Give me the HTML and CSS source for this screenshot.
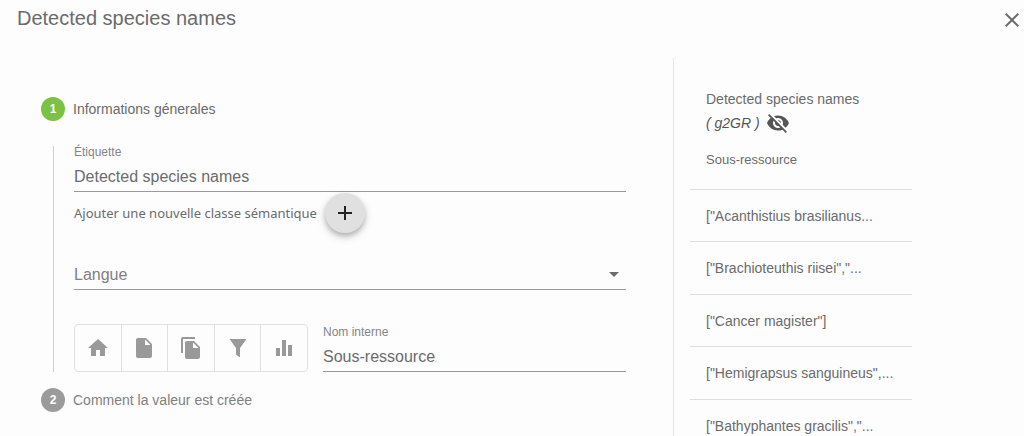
FILE: index.html
```html
<!DOCTYPE html>
<html lang="fr">
<head>
    <meta charset="UTF-8">
    <meta name="viewport" content="width=device-width, initial-scale=1">
    <title>Detected species names</title>
    <link rel="stylesheet" href="styles.css">
</head>
<body>
    <div class="dialog">
        <header class="dialog-header">
            <h1>Detected species names</h1>
            <button type="button" class="close-btn" aria-label="Fermer">
                <svg class="icon" viewBox="0 0 24 24"><path d="M19 6.41L17.59 5 12 10.59 6.41 5 5 6.41 10.59 12 5 17.59 6.41 19 12 13.41 17.59 19 19 17.59 13.41 12z"/></svg>
            </button>
        </header>

        <div class="dialog-body">
            <main class="stepper">
                <button type="button" class="step-label active">
                    <span class="step-number">1</span>
                    Informations génerales
                </button>

                <form class="step-content">
                    <div class="field">
                        <label for="label">Étiquette</label>
                        <input type="text" id="label" value="Detected species names">
                    </div>

                    <div class="add-class">
                        <span>Ajouter une nouvelle classe sémantique</span>
                        <button type="button" class="fab" aria-label="Ajouter">
                            <svg class="icon" viewBox="0 0 24 24"><path d="M19 13h-6v6h-2v-6H5v-2h6V5h2v6h6v2z"/></svg>
                        </button>
                    </div>

                    <div class="select-field">
                        <select aria-label="Langue">
                            <option value="">Langue</option>
                            <option value="fr">Français</option>
                            <option value="en">Anglais</option>
                        </select>
                        <svg class="icon select-arrow" viewBox="0 0 24 24"><path d="M7 10l5 5 5-5z"/></svg>
                    </div>

                    <div class="scope-row">
                        <div class="toggle-group">
                            <button type="button" aria-label="Accueil">
                                <svg class="icon" viewBox="0 0 24 24"><path d="M10 20v-6h4v6h5v-8h3L12 3 2 12h3v8z"/></svg>
                            </button>
                            <button type="button" aria-label="Document">
                                <svg class="icon" viewBox="0 0 24 24"><path d="M6 2c-1.1 0-1.99.9-1.99 2L4 20c0 1.100.89 2 1.990 2H18c1.100 0 2-.9 2-2V8l-6-6H6zm7 7V3.500L18.500 9H13z"/></svg>
                            </button>
                            <button type="button" aria-label="Sous-ressource">
                                <svg class="icon" viewBox="0 0 24 24"><path d="M16 1H4c-1.100 0-2 .9-2 2v14h2V3h12V1zm-1 4l6 6v10c0 1.100-.9 2-2 2H7.990C6.890 23 6 22.100 6 21l.01-14c0-1.100.89-2 1.990-2h7zm-1 7h5.500L14 6.500V12z"/></svg>
                            </button>
                            <button type="button" aria-label="Facette">
                                <svg class="icon" viewBox="0 0 24 24"><path d="M3.500 3h17L14 12v8.500q0 .8-.8.5L10 18.500V12z"/></svg>
                            </button>
                            <button type="button" aria-label="Graphique">
                                <svg class="icon" viewBox="0 0 24 24"><path d="M10 20h4V4h-4v16zm-6 0h4v-8H4v8zM16 9v11h4V9h-4z"/></svg>
                            </button>
                        </div>
                        <div class="field">
                            <label for="internal-name">Nom interne</label>
                            <input type="text" id="internal-name" value="Sous-ressource">
                        </div>
                    </div>
                </form>

                <button type="button" class="step-label">
                    <span class="step-number">2</span>
                    Comment la valeur est créée
                </button>
            </main>

            <aside class="preview">
                <table>
                    <thead>
                        <tr>
                            <th>
                                <div>Detected species names</div>
                                <div class="field-id">
                                    <i>( g2GR )</i>
                                    <svg class="icon" viewBox="0 0 24 24"><path d="M12 7c2.760 0 5 2.240 5 5 0 .65-.13 1.260-.36 1.830l2.920 2.920c1.510-1.260 2.700-2.890 3.430-4.750-1.730-4.390-6-7.500-11-7.500-1.400 0-2.740.25-3.980.7l2.160 2.160C10.740 7.130 11.350 7 12 7zM2 4.270l2.280 2.280.46.46C3.080 8.300 1.780 10.020 1 12c1.730 4.390 6 7.500 11 7.500 1.550 0 3.030-.3 4.380-.84l.42.42L19.730 22 21 20.730 3.270 3 2 4.270zM7.530 9.800l1.550 1.550c-.05.21-.08.43-.08.65 0 1.660 1.340 3 3 3 .22 0 .44-.03.65-.08l1.550 1.550c-.67.33-1.410.53-2.200.53-2.760 0-5-2.240-5-5 0-.79.2-1.530.53-2.200zm4.310-.78l3.150 3.150.02-.16c0-1.660-1.340-3-3-3l-.17.01z"/></svg>
                                </div>
                                <div class="field-scope">Sous-ressource</div>
                            </th>
                        </tr>
                    </thead>
                    <tbody>
                        <tr><td>["Acanthistius brasilianus...</td></tr>
                        <tr><td>["Brachioteuthis riisei","...</td></tr>
                        <tr><td>["Cancer magister"]</td></tr>
                        <tr><td>["Hemigrapsus sanguineus",...</td></tr>
                        <tr><td>["Bathyphantes gracilis","...</td></tr>
                    </tbody>
                </table>
            </aside>
        </div>
    </div>
</body>
</html>
```
FILE: styles.css
```css
* {
    box-sizing: border-box;
}

body {
    margin: 0;
    font-family: Arial, "Liberation Sans", sans-serif;
    font-size: 14px;
    line-height: 24px;
    color: #6b6b6b;
    background: #fdfdfd;
}

button,
input,
select {
    font-family: inherit;
    color: inherit;
    margin: 0;
    padding: 0;
    border: none;
    background: none;
}

button {
    cursor: pointer;
}

.icon {
    display: block;
    width: 24px;
    height: 24px;
    fill: currentColor;
}

.dialog {
    display: flex;
    flex-direction: column;
    height: 100vh;
    overflow: hidden;
}

.dialog-header {
    display: flex;
    justify-content: space-between;
    padding: 6px 0 6px 17px;
}

.dialog-header h1 {
    margin: 0;
    font-size: 20px;
    font-weight: normal;
}

.close-btn {
    margin-top: 2px;
}

.dialog-body {
    display: flex;
    flex: 1;
    min-height: 0;
    margin-top: 20px;
}

/* Stepper */
.stepper {
    flex: 1;
    padding: 39px 47px 0 41px;
}

.step-label {
    display: flex;
    align-items: center;
    gap: 8px;
    font-size: 14px;
    line-height: 24px;
    color: #808080;
}

.step-label.active {
    color: #6b6b6b;
}

.step-number {
    width: 24px;
    height: 24px;
    border-radius: 50%;
    font-size: 12px;
    font-weight: bold;
    color: white;
    background: #9b9b9b;
}

.active .step-number {
    background: #7bc142;
}

.step-content {
    margin: 25px 0 16px 12px;
    padding-left: 20px;
    border-left: 1px solid #cfcfcf;
}

.field label {
    display: block;
    font-size: 12px;
    line-height: 13px;
    color: #858585;
}

.field input,
.select-field select {
    display: block;
    width: 100%;
    height: 33px;
    padding-top: 3px;
    font-size: 16px;
    border-bottom: 1px solid #999;
}

.add-class {
    display: flex;
    align-items: center;
    gap: 8px;
    margin-top: 1px;
    font-family: "Segoe UI", "Noto Sans", sans-serif;
    font-size: 13px;
}

.fab {
    display: flex;
    align-items: center;
    justify-content: center;
    width: 40px;
    height: 40px;
    border-radius: 50%;
    color: #222;
    background: #e0e0e0;
    box-shadow: 0 3px 5px rgba(0,0,0,0.2), 0 4px 10px rgba(0,0,0,0.14);
}

.select-field {
    position: relative;
    margin-top: 24px;
}

.select-field select {
    appearance: none;
    color: #808080;
}

.select-arrow {
    position: absolute;
    top: 5px;
    right: 0;
    pointer-events: none;
}

.scope-row {
    display: flex;
    align-items: flex-end;
    gap: 15px;
    margin-top: 34px;
}

.scope-row .field {
    flex: 1;
}

.toggle-group {
    display: flex;
    width: 234px;
    height: 48px;
    border: 1px solid #e0e0e0;
    border-radius: 4px;
}

.toggle-group button {
    display: flex;
    flex: 1;
    align-items: center;
    justify-content: center;
    color: #999;
}

.toggle-group button + button {
    border-left: 1px solid #e0e0e0;
}

/* Preview */
.preview {
    width: 351px;
    padding: 13px 16px 0;
    border-left: 1px solid #e6e6e6;
}

.preview table {
    width: 222px;
    border-collapse: separate;
    border-spacing: 0;
}

.preview th,
.preview td {
    text-align: left;
    font-weight: normal;
    border-bottom: 1px solid #dedede;
}

.preview th {
    padding: 16px 16px 19px;
}

.preview td {
    height: 52px;
    padding: 0 16px;
    white-space: nowrap;
}

.preview tr:nth-child(even) td {
    height: 53px;
}

.field-id {
    display: flex;
    gap: 6px;
    color: #555;
}

.field-scope {
    margin-top: 15px;
    font-size: 13px;
    line-height: 20px;
}
```
